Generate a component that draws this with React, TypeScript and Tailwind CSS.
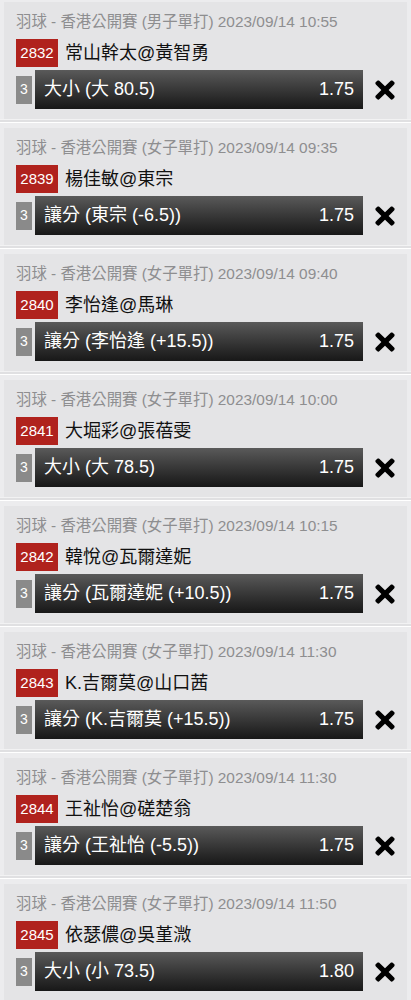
import React from 'react';
import { FaTimes } from 'react-icons/fa';

interface Bet {
  event: string;
  time: string;
  code: string;
  match: string;
  pick: string;
  odds: string;
}

const bets: Bet[] = [
  { event: '男子單打', time: '2023/09/14 10:55', code: '2832', match: '常山幹太@黃智勇', pick: '大小 (大 80.5)', odds: '1.75' },
  { event: '女子單打', time: '2023/09/14 09:35', code: '2839', match: '楊佳敏@東宗', pick: '讓分 (東宗 (-6.5))', odds: '1.75' },
  { event: '女子單打', time: '2023/09/14 09:40', code: '2840', match: '李怡逢@馬琳', pick: '讓分 (李怡逢 (+15.5))', odds: '1.75' },
  { event: '女子單打', time: '2023/09/14 10:00', code: '2841', match: '大堀彩@張蓓雯', pick: '大小 (大 78.5)', odds: '1.75' },
  { event: '女子單打', time: '2023/09/14 10:15', code: '2842', match: '韓悅@瓦爾達妮', pick: '讓分 (瓦爾達妮 (+10.5))', odds: '1.75' },
  { event: '女子單打', time: '2023/09/14 11:30', code: '2843', match: 'K.吉爾莫@山口茜', pick: '讓分 (K.吉爾莫 (+15.5))', odds: '1.75' },
  { event: '女子單打', time: '2023/09/14 11:30', code: '2844', match: '王祉怡@磋楚翁', pick: '讓分 (王祉怡 (-5.5))', odds: '1.75' },
  { event: '女子單打', time: '2023/09/14 11:50', code: '2845', match: '依瑟儂@吳堇溦', pick: '大小 (小 73.5)', odds: '1.80' },
];

const font = { fontFamily: '"Liberation Sans", "Noto Sans CJK TC", sans-serif' };

const BetCard = ({ bet }: { bet: Bet }) => (
  <div>
    <div className="mx-[4px] h-[117px] bg-[#e4e4e6] pl-[12px] pt-[9px]">
      {/* Event line */}
      <div className="h-[22px] text-[15.4px] leading-[22px] text-[#8e8e90] whitespace-nowrap">
        羽球 - 香港公開賽 ({bet.event}) {bet.time}
      </div>

      {/* Match */}
      <div className="mt-[6px] flex h-[28px] items-center">
        <span className="flex h-[28px] w-[42px] shrink-0 items-center justify-center bg-[#b0221d] text-[15px] text-white">
          {bet.code}
        </span>
        <span className="ml-[7px] text-[18px] text-[#111]">{bet.match}</span>
      </div>

      {/* Selection */}
      <div className="mt-[3px] flex h-[39px] items-center">
        <span className="flex h-[28px] w-[16px] shrink-0 items-center justify-center bg-[#8a8a8a] text-[14px] text-white">
          3
        </span>
        <div className="ml-[3px] flex h-[39px] w-[328px] shrink-0 items-center justify-between bg-gradient-to-b from-[#5a5a5a] via-[#383838] to-[#181818] pl-[9px] pr-[9px] text-[18px] text-white">
          <span>{bet.pick}</span>
          <span>{bet.odds}</span>
        </div>
        <FaTimes className="ml-[8px] shrink-0 text-[28px] text-black" />
      </div>
    </div>
    <div className="h-[1px] bg-[#f2f2f3]" />
    <div className="h-[2px] bg-[#e0e0e2]" />
    <div className="h-[1px] bg-white" />
    <div className="h-[5px] bg-[#ececee]" />
  </div>
);

export default function App() {
  return (
    <div className="min-h-screen w-full bg-[#ececee]" style={font}>
      <div className="h-[2px]" />
      {bets.map((bet) => (
        <BetCard key={bet.code} bet={bet} />
      ))}
    </div>
  );
}
